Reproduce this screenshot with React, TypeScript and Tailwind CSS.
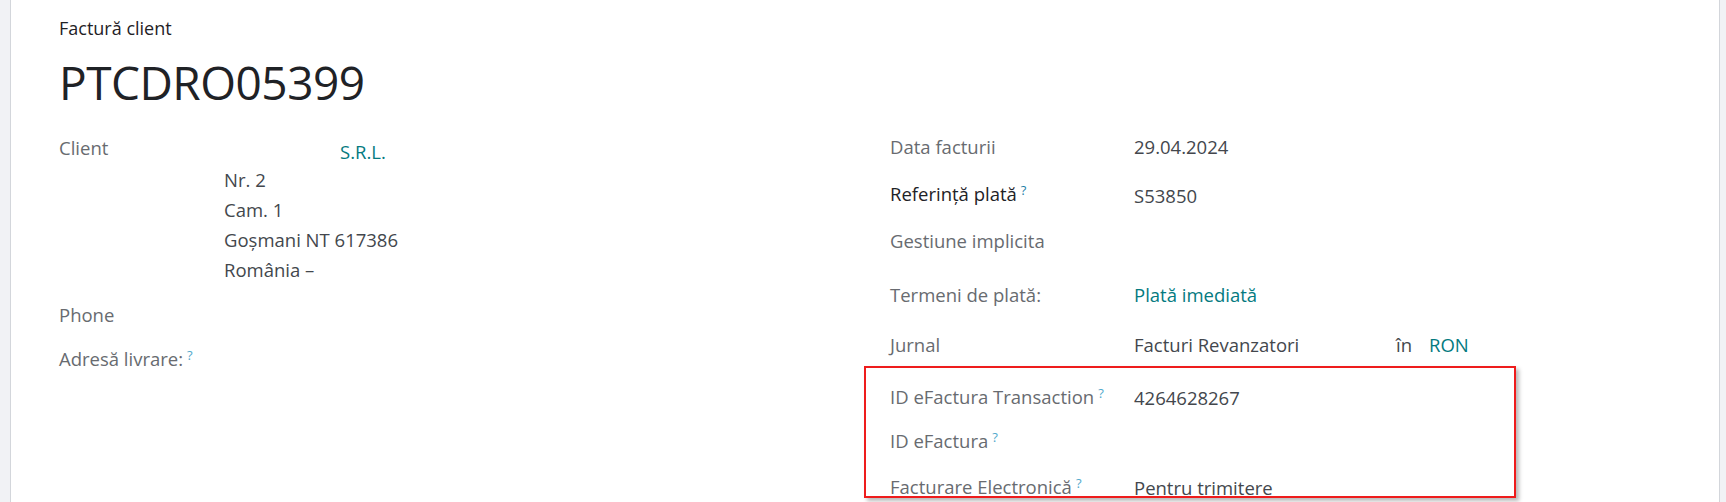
import React from "react";

const font = { fontFamily: '"Open Sans", "Noto Sans", "Liberation Sans", sans-serif' };

function Help({ dark }: { dark?: boolean }) {
  return (
    <sup className={`ml-[4px] text-[13px] ${dark ? "text-[#1f7fa8]" : "text-[#52a9cc]"}`}>?</sup>
  );
}

/* ---------- left group row ---------- */
function LeftRow({
  label,
  children,
  className = "",
  labelClass = "",
}: {
  label: React.ReactNode;
  children?: React.ReactNode;
  className?: string;
  labelClass?: string;
}) {
  return (
    <div className={`flex ${className}`}>
      <div className={`w-[165px] shrink-0 text-[#686b70] ${labelClass}`}>{label}</div>
      <div className="flex-1 text-[#43474d]">{children}</div>
    </div>
  );
}

/* ---------- right group row ---------- */
function RightRow({
  label,
  children,
  className = "",
  dark,
}: {
  label: React.ReactNode;
  children?: React.ReactNode;
  className?: string;
  dark?: boolean;
}) {
  return (
    <div className={`flex ${className}`}>
      <div className={`w-[244px] shrink-0 ${dark ? "text-[#1e2226]" : "text-[#686b70]"}`}>
        {label}
      </div>
      <div className="flex-1 text-[#43474d]">{children}</div>
    </div>
  );
}

export default function App() {
  return (
    <div className="flex h-[502px] w-full overflow-hidden bg-[#f1f2f5]" style={font}>
      <div className="w-[10px] shrink-0" />
      <div className="w-[1710px] shrink-0 border-x border-[#d3d6db] bg-white pl-[48px] pt-[14px]">
        {/* header */}
        <div className="text-[18px] leading-[28px] text-[#1f2226]">Factură client</div>
        <div className="mt-[12px] text-[46px] leading-[56px] text-[#1f2226] tracking-[-0.5px]">
          PTCDRO05399
        </div>

        {/* body */}
        <div className="mt-[20px] flex text-[18.5px] leading-[30px]">
          {/* left group */}
          <div className="w-[831px] shrink-0">
            <LeftRow label="Client" labelClass="pt-[3px]">
              <div className="-mb-[2px] pl-[116px] pt-[7px] text-[#047a80]">S.R.L.</div>
              <div>Nr. 2</div>
              <div>Cam. 1</div>
              <div>Goșmani NT 617386</div>
              <div>România –</div>
            </LeftRow>
            <LeftRow label="Phone" className="mt-[15px]" />
            <LeftRow
              label={
                <>
                  Adresă livrare:<Help />
                </>
              }
              className="mt-[14px]"
            />
          </div>

          {/* right group */}
          <div className="flex-1 pt-[2px]">
            <RightRow label="Data facturii">29.04.2024</RightRow>
            <RightRow
              label={
                <>
                  Referință plată<Help dark />
                </>
              }
              dark
              className="mt-[17px]"
            >
              <div className="pt-[2px]">S53850</div>
            </RightRow>
            <RightRow label="Gestiune implicita" className="mt-[15px]" />
            <RightRow label="Termeni de plată:" className="mt-[24px]">
              <span className="text-[#047a80]">Plată imediată</span>
            </RightRow>
            <RightRow label="Jurnal" className="mt-[20px]">
              <div className="flex">
                <span className="w-[262px]">Facturi Revanzatori</span>
                <span className="w-[33px]">în</span>
                <span className="text-[#047a80]">RON</span>
              </div>
            </RightRow>

            {/* highlighted block */}
            <div className="mt-[6px] -ml-[26px] h-[132px] w-[652px] border-2 border-[#ee1c1c] pl-[24px] pt-[14px] shadow-[3px_3px_4px_rgba(0,0,0,0.28)]">
              <RightRow
                label={
                  <>
                    ID eFactura Transaction<Help />
                  </>
                }
              >
                <div className="pt-[1px]">4264628267</div>
              </RightRow>
              <RightRow
                label={
                  <>
                    ID eFactura<Help />
                  </>
                }
                className="mt-[13px]"
              />
              <RightRow
                label={
                  <>
                    Facturare Electronică<Help />
                  </>
                }
                className="mt-[16px]"
              >
                <div className="pt-[1px]">Pentru trimitere</div>
              </RightRow>
            </div>
          </div>
        </div>
      </div>
      <div className="flex-1" />
    </div>
  );
}
